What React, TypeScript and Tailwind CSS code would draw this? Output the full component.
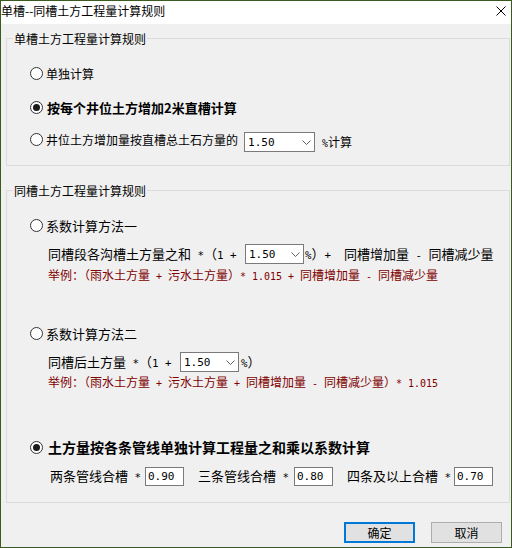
import React from "react";

// ascii runs inside CJK text are half-width, like the dialog font
const M = ({ children }: { children: React.ReactNode }) => (
  <span className="font-['DejaVu_Sans_Mono',monospace] text-[0.83em]">{children}</span>
);

const Radio = ({ checked }: { checked?: boolean }) => (
  <svg width="13" height="13" viewBox="0 0 13 13" className="shrink-0">
    <circle cx="6.5" cy="6.5" r="6" fill="#fff" stroke="#333" />
    {checked && <circle cx="6.5" cy="6.5" r="3.5" fill="#1a1a1a" />}
  </svg>
);

const Combo = ({ value, className }: { value: string; className: string }) => (
  <div
    className={`flex items-center justify-between shrink-0 bg-white border border-[#7a7a7a] pl-[3px] pr-[3px] ${className}`}
  >
    <span className="font-['DejaVu_Sans_Mono',monospace] text-[11px] leading-none">{value}</span>
    <svg width="9" height="5" viewBox="0 0 9 5">
      <polyline points="0.5,0.5 4.5,4.5 8.5,0.5" fill="none" stroke="#606060" />
    </svg>
  </div>
);

const Field = ({ value, className }: { value: string; className: string }) => (
  <div
    className={`flex items-center shrink-0 w-[39px] h-[19px] bg-white border border-[#7a7a7a] pl-[2px] font-['DejaVu_Sans_Mono',monospace] text-[11px] leading-none ${className}`}
  >
    {value}
  </div>
);

const App: React.FC = () => {
  return (
    <div className="w-[512px] h-[548px] overflow-hidden flex flex-col border border-[#3a5a1f] bg-[#f0f0f0] text-black font-['Noto_Sans_CJK_SC',sans-serif]">
      {/* title bar */}
      <div className="flex items-start justify-between h-[23px] bg-white shrink-0">
        <span className="pt-[1px] text-[12px] leading-[17px]">单槽--同槽土方工程量计算规则</span>
        <svg width="10" height="10" viewBox="0 0 10 10" className="mt-[5px] mr-[5px]">
          <path d="M0.5 0.5 L9.5 9.5 M9.5 0.5 L0.5 9.5" stroke="#000" strokeWidth="1" />
        </svg>
      </div>

      {/* group 1 */}
      <fieldset className="ml-[5px] mt-[6px] w-[504px] border border-[#dcdcdc] shrink-0">
        <legend className="ml-[6px] px-[1px] text-[12px] leading-[17px]">单槽土方工程量计算规则</legend>
        <div className="flex flex-col pl-[23px] pb-[16px]">
          <div className="flex items-center h-[20px] mt-[16px]">
            <Radio />
            <span className="ml-[3px] text-[12px] leading-[17px]">单独计算</span>
          </div>
          <div className="flex items-center h-[20px] mt-[14px]">
            <Radio checked />
            <span className="ml-[4px] text-[13px] leading-[17px] font-bold">按每个井位土方增加2米直槽计算</span>
          </div>
          <div className="flex items-center h-[20px] mt-[12px]">
            <Radio />
            <span className="ml-[3px] text-[12px] leading-[17px]">井位土方增加量按直槽总土石方量的</span>
            <Combo value="1.50" className="ml-[6px] mt-[6px] w-[71px] h-[20px]" />
            <span className="ml-[7px] mt-[6px] text-[12px] leading-[17px]">
              <M>%</M>计算
            </span>
          </div>
        </div>
      </fieldset>

      {/* group 2 */}
      <fieldset className="ml-[5px] mt-[16px] w-[504px] border border-[#dcdcdc] shrink-0">
        <legend className="ml-[6px] px-[1px] text-[12px] leading-[17px]">同槽土方工程量计算规则</legend>
        <div className="flex flex-col pl-[23px] pb-[16px]">
          <div className="flex items-center h-[20px] mt-[16px]">
            <Radio />
            <span className="ml-[3px] text-[13px] leading-[17px]">系数计算方法一</span>
          </div>
          <div className="flex items-center h-[20px] mt-[9px] pl-[18px] text-[13px] leading-[17px] whitespace-pre">
            <span>
              同槽段各沟槽土方量之和<M> *</M>（<M>1 + </M>
            </span>
            <Combo value="1.50" className="ml-[2px] w-[59px] h-[20px]" />
            <span className="ml-[1px]">
              <M>%</M>）<M>+  </M>同槽增加量<M> - </M>同槽减少量
            </span>
          </div>
          <div className="mt-[2px] h-[17px] pl-[18px] text-[12px] leading-[17px] text-[#800000] whitespace-pre">
            举例：（雨水土方量<M> + </M>污水土方量）<M>* 1.015 + </M>同槽增加量<M> - </M>同槽减少量
          </div>

          <div className="flex items-center h-[20px] mt-[40px]">
            <Radio />
            <span className="ml-[3px] text-[13px] leading-[17px]">系数计算方法二</span>
          </div>
          <div className="flex items-center h-[20px] mt-[9px] pl-[18px] text-[13px] leading-[17px] whitespace-pre">
            <span>
              同槽后土方量<M> *</M>（<M>1 + </M>
            </span>
            <Combo value="1.50" className="ml-[2px] w-[59px] h-[20px]" />
            <span className="ml-[2px]">
              <M>%</M>）
            </span>
          </div>
          <div className="mt-[1px] h-[17px] pl-[18px] text-[12px] leading-[17px] text-[#800000] whitespace-pre">
            举例：（雨水土方量<M> + </M>污水土方量<M> + </M>同槽增加量<M> - </M>同槽减少量）<M>* 1.015</M>
          </div>

          <div className="flex items-center h-[20px] mt-[47px]">
            <Radio checked />
            <span className="ml-[5px] text-[14px] leading-[18px] font-bold">
              土方量按各条管线单独计算工程量之和乘以系数计算
            </span>
          </div>
          <div className="flex items-center h-[20px] mt-[9px] pl-[20px] text-[13px] leading-[17px] whitespace-pre">
            <span>
              两条管线合槽<M> *</M>
            </span>
            <Field value="0.90" className="ml-[4px]" />
            <span className="ml-[14px]">
              三条管线合槽<M> *</M>
            </span>
            <Field value="0.80" className="ml-[5px]" />
            <span className="ml-[14px]">
              四条及以上合槽<M> *</M>
            </span>
            <Field value="0.70" className="ml-[3px]" />
          </div>
        </div>
      </fieldset>

      {/* buttons */}
      <div className="flex justify-end gap-[16px] mt-[19px] pr-[9px]">
        <button className="w-[71px] h-[21px] bg-[#e1e1e1] border-2 border-[#0078d7] text-[12px] leading-none">
          确定
        </button>
        <button className="w-[71px] h-[21px] bg-[#e1e1e1] border border-[#adadad] text-[12px] leading-none">
          取消
        </button>
      </div>
    </div>
  );
};

export default App;
